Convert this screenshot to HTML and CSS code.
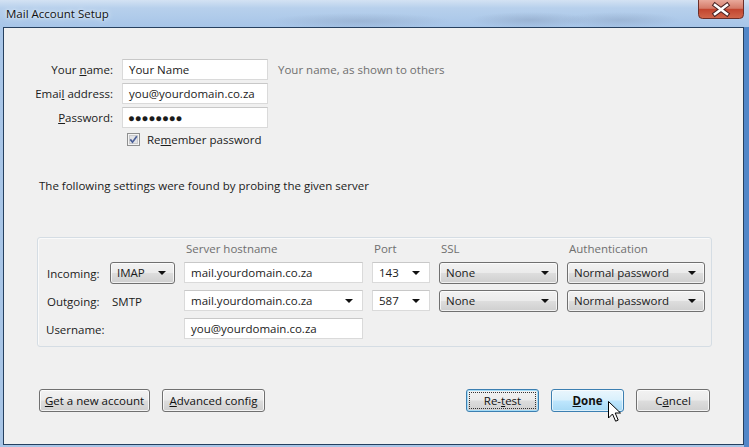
FILE: index.html
```html
<!DOCTYPE html>
<html>
<head>
<meta charset="utf-8">
<title>Mail Account Setup</title>
<link rel="stylesheet" href="styles.css">
</head>
<body>
<div class="window">
  <div class="titlebar">
    <span class="title">Mail Account Setup</span>
    <div class="close">
      <svg width="46" height="19" viewBox="0 0 46 19">
        <defs>
          <linearGradient id="cg" x1="0" y1="0" x2="0" y2="1">
            <stop offset="0" stop-color="#e9a99b"/>
            <stop offset="0.45" stop-color="#d47a68"/>
            <stop offset="0.5" stop-color="#c2452f"/>
            <stop offset="1" stop-color="#d1674c"/>
          </linearGradient>
        </defs>
        <path d="M0.5 0 V14.5 Q0.5 18.5 4.5 18.5 H41.5 Q45.5 18.5 45.5 14.5 V0" fill="url(#cg)" stroke="#6b2f2a"/>
        <path d="M17 5 L29 14 M29 5 L17 14" stroke="#4a2222" stroke-width="4.6" stroke-linecap="square"/>
        <path d="M17 5 L29 14 M29 5 L17 14" stroke="#ffffff" stroke-width="2.6" stroke-linecap="square"/>
      </svg>
    </div>
  </div>
  <div class="client">
    <div class="identity">
      <label class="lbl">Your <u>n</u>ame:</label>
      <div class="field">Your Name</div>
      <span class="hint">Your name, as shown to others</span>

      <label class="lbl">Emai<u>l</u> address:</label>
      <div class="field">you@yourdomain.co.za</div>
      <span></span>

      <label class="lbl"><u>P</u>assword:</label>
      <div class="field pw">●●●●●●●●</div>
      <span></span>

      <div class="remember">
        <span class="check">
          <svg width="13" height="13" viewBox="0 0 13 13">
            <rect x="0.5" y="0.5" width="12" height="12" fill="#f4f4f4" stroke="#8e8f8f"/>
            <rect x="2.5" y="2.5" width="8" height="8" fill="#e2e3e6" stroke="#c9cacc"/>
            <path d="M3.3 6.4 L5.5 9.2 L9.8 3.2" fill="none" stroke="#4a5f97" stroke-width="1.7"/>
          </svg>
        </span>
        <span>Re<u>m</u>ember password</span>
      </div>
    </div>

    <p class="probe">The following settings were found by probing the given server</p>

    <div class="servers">
      <span></span>
      <span></span>
      <span class="head">Server hostname</span>
      <span class="head">Port</span>
      <span class="head">SSL</span>
      <span class="head">Authentication</span>

      <span class="rowlbl">Incoming:</span>
      <div class="dd">IMAP<i class="arrow"></i></div>
      <div class="field">mail.yourdomain.co.za</div>
      <div class="field combo">143<i class="arrow"></i></div>
      <div class="dd">None<i class="arrow"></i></div>
      <div class="dd">Normal password<i class="arrow"></i></div>

      <span class="rowlbl">Outgoing:</span>
      <span class="smtp">SMTP</span>
      <div class="field combo">mail.yourdomain.co.za<i class="arrow"></i></div>
      <div class="field combo">587<i class="arrow"></i></div>
      <div class="dd">None<i class="arrow"></i></div>
      <div class="dd">Normal password<i class="arrow"></i></div>

      <span class="rowlbl user">Username:</span>
      <span></span>
      <div class="field">you@yourdomain.co.za</div>
    </div>

    <div class="actions">
      <div class="group left">
        <button class="btn btn-new"><u>G</u>et a new account</button>
        <button class="btn btn-adv"><u>A</u>dvanced config</button>
      </div>
      <div class="group right">
        <button class="btn btn-std focus"><span class="focusrect">Re-<u>t</u>est</span></button>
        <button class="btn btn-std hover done"><u>D</u>one</button>
        <button class="btn btn-std cancel">C<u>a</u>ncel</button>
      </div>
    </div>
  </div>
  <svg class="cursor" width="14" height="22" viewBox="0 0 14 22">
    <path d="M0.5 0.5 L0.5 17 L4.5 13 L7.6 20.2 L10.2 19.1 L7.2 12 L12.5 12 Z" fill="#ffffff" stroke="#000000" stroke-width="1" stroke-linejoin="miter"/>
  </svg>
</div>
</body>
</html>
```
FILE: styles.css
```css
* { box-sizing: border-box; }

html, body {
  margin: 0;
  padding: 0;
  background: #4f86c6;
}

body {
  font-family: "Open Sans", "Noto Sans", sans-serif;
  font-size: 11.5px;
  color: #1b1b1b;
}

.window {
  position: relative;
  width: 749px;
  height: 447px;
  overflow: hidden;
  background:
    linear-gradient(to right, rgba(0,0,0,0) 0, rgba(0,0,0,0) 744px, #5287c8 744px),
    linear-gradient(to bottom, #b8cfe9 0, #a9c6e8 18px, #a8c5e6 100%);
}

.titlebar {
  height: 27px;
  display: flex;
  align-items: flex-start;
  justify-content: space-between;
  background:
    radial-gradient(ellipse 60px 8px at 530px 20px, rgba(120,140,170,0.35), rgba(120,140,170,0) 100%),
    radial-gradient(ellipse 60px 8px at 620px 20px, rgba(120,140,170,0.3), rgba(120,140,170,0) 100%),
    radial-gradient(ellipse 90px 8px at 360px 21px, rgba(120,140,170,0.3), rgba(120,140,170,0) 100%),
    linear-gradient(to bottom, #d3e2f3 0, #b7d0ec 30%, #a7c5e8 100%);
}

.title {
  margin: 6px 0 0 6px;
  font-size: 11.5px;
  color: #111;
  text-shadow: 0 0 6px #e8f1fb, 0 0 3px #eef5fc;
}

.close {
  width: 46px;
  height: 19px;
  margin-right: 5px;
}
.close svg { display: block; }

.client {
  margin: 0 5px 0 3px;
  height: 418px;
  border: 1px solid #26405f;
  background: #f0f0f0;
  display: flex;
  flex-direction: column;
}

/* identity */
.identity {
  display: grid;
  grid-template-columns: 109px 146px auto;
  grid-template-rows: 21px 21px 21px 15px;
  column-gap: 9px;
  row-gap: 3px;
  margin-top: 31px;
  align-items: center;
}
.identity .remember {
  grid-column: 2 / 4;
  grid-row: 4;
  align-self: start;
  height: 13px;
  margin-top: 2px;
}

.lbl {
  text-align: right;
  white-space: nowrap;
}

.hint {
  color: #6f6f6f;
  margin-left: 1px;
  white-space: nowrap;
}

.field {
  position: relative;
  height: 21px;
  line-height: 19px;
  padding: 0 6px;
  background: #fff;
  border: 1px solid #dadada;
  border-top-color: #c8c8c8;
  white-space: nowrap;
  overflow: hidden;
}
.field.pw {
  font-size: 11.5px;
  letter-spacing: -0.15px;
  padding-left: 5px;
}
.field.combo { padding-right: 22px; }

.remember {
  display: flex;
  align-items: center;
  gap: 7px;
  padding-left: 5px;
  white-space: nowrap;
}
.check svg { display: block; }

.probe {
  margin: 32px 0 0 35px;
  line-height: 16px;
}

/* server box */
.servers {
  margin: 43px 0 0 33px;
  width: 675px;
  padding: 2px 6px 6px 8px;
  border: 1px solid #d5dde4;
  border-radius: 3px;
  box-shadow: inset 1px 1px 0 #fafafa;
  display: grid;
  grid-template-columns: 55px 65px 179px 58px 119px 138px;
  grid-template-rows: 16px 22px 22px 22px;
  column-gap: 9px;
  row-gap: 6px;
  align-items: center;
}
.servers .field { height: 21px; align-self: start; }

.head {
  color: #6f6f6f;
  padding-left: 2px;
}
.rowlbl { margin-left: 1px; white-space: nowrap; }
.rowlbl.user { margin-left: 0; }
.smtp { padding-left: 2px; }

.dd {
  position: relative;
  height: 22px;
  line-height: 20px;
  padding: 0 6px;
  border: 1px solid #707070;
  border-radius: 3px;
  background: linear-gradient(to bottom, #f2f2f2 0%, #ebebeb 48%, #dddddd 52%, #cfcfcf 100%);
  box-shadow: inset 0 0 0 1px rgba(255,255,255,0.7);
  white-space: nowrap;
}

.arrow {
  position: absolute;
  right: 8px;
  top: 50%;
  margin-top: -2px;
  width: 0;
  height: 0;
  border-left: 4px solid transparent;
  border-right: 4px solid transparent;
  border-top: 4px solid #111;
}
.field.combo .arrow { right: 9px; }

/* buttons */
.actions {
  margin-top: 42px;
  padding: 0 33px 0 35px;
  display: flex;
  justify-content: space-between;
}
.group { display: flex; }
.group.left { gap: 12px; }
.group.right { gap: 12px; }

.btn {
  height: 23px;
  padding: 0;
  font-family: inherit;
  font-size: 11.5px;
  color: #111;
  border: 1px solid #707070;
  border-radius: 3px;
  background: linear-gradient(to bottom, #f2f2f2 0%, #ebebeb 48%, #dddddd 52%, #cfcfcf 100%);
  box-shadow: inset 0 0 0 1px rgba(255,255,255,0.75);
  display: flex;
  align-items: center;
  justify-content: center;
}
.btn-new { width: 111px; }
.btn-adv { width: 103px; }
.btn-std { width: 73px; }
.btn.cancel { width: 74px; }

.btn.focus {
  border-color: #3c7fb1;
  box-shadow: inset 0 0 0 1px #a5dcf7;
}
.focusrect {
  width: 67px;
  height: 17px;
  line-height: 15px;
  border: 1px dotted #333;
  text-align: center;
}

.btn.hover {
  border-color: #3c7fb1;
  background: linear-gradient(to bottom, #eaf6fd 0%, #d9f0fc 48%, #bee6fd 52%, #a7d9f5 100%);
  box-shadow: inset 0 0 0 1px rgba(255,255,255,0.6);
}
.btn.done { font-weight: bold; }

.cursor {
  position: absolute;
  left: 608px;
  top: 401px;
}
```
